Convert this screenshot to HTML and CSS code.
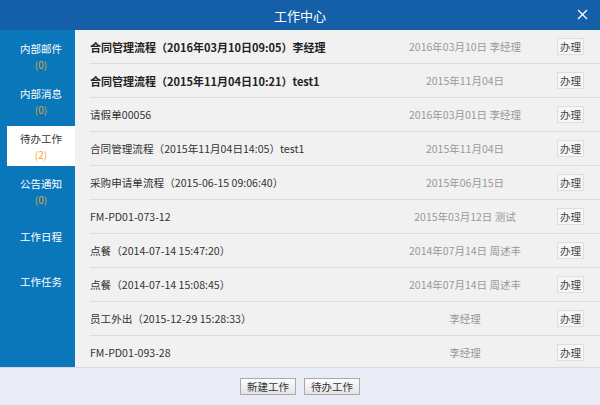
FILE: index.html
```html
<!DOCTYPE html>
<html lang="zh-CN">
  <head>
    <meta charset="UTF-8" />
    <meta name="viewport" content="width=device-width, initial-scale=1.0" />
    <title>工作中心</title>
    <link rel="stylesheet" href="styles.css">
  </head>
  <body>
    <section class="window">
      <header class="titlebar">
        <span class="title">工作中心</span>
        <span class="close">
          <svg width="11" height="11" viewBox="0 0 11 11">
            <path d="M1 1 L10 10 M10 1 L1 10" stroke="#fff" stroke-width="1.3" fill="none" />
          </svg>
        </span>
      </header>

      <div class="content">
        <ul class="side-menu">
          <li class="side-item">
            <span class="side-label">内部邮件</span>
            <span class="side-count">(0)</span>
          </li>
          <li class="side-item">
            <span class="side-label">内部消息</span>
            <span class="side-count">(0)</span>
          </li>
          <li class="side-item side-item-active">
            <span class="side-label">待办工作</span>
            <span class="side-count">(2)</span>
          </li>
          <li class="side-item">
            <span class="side-label">公告通知</span>
            <span class="side-count">(0)</span>
          </li>
          <li class="side-item">
            <span class="side-label">工作日程</span>
          </li>
          <li class="side-item">
            <span class="side-label">工作任务</span>
          </li>
        </ul>

        <ul class="work-list">
          <li class="work-row work-row-new">
            <span class="work-title">合同管理流程（2016年03月10日09:05）李经理</span>
            <span class="work-date">2016年03月10日 李经理</span>
            <span class="work-btn">办理</span>
          </li>
          <li class="work-row work-row-new">
            <span class="work-title">合同管理流程（2015年11月04日10:21）test1</span>
            <span class="work-date">2015年11月04日</span>
            <span class="work-btn">办理</span>
          </li>
          <li class="work-row">
            <span class="work-title">请假单00056</span>
            <span class="work-date">2016年03月01日 李经理</span>
            <span class="work-btn">办理</span>
          </li>
          <li class="work-row">
            <span class="work-title">合同管理流程（2015年11月04日14:05）test1</span>
            <span class="work-date">2015年11月04日</span>
            <span class="work-btn">办理</span>
          </li>
          <li class="work-row">
            <span class="work-title">采购申请单流程（2015-06-15 09:06:40）</span>
            <span class="work-date">2015年06月15日</span>
            <span class="work-btn">办理</span>
          </li>
          <li class="work-row">
            <span class="work-title">FM-PD01-073-12</span>
            <span class="work-date">2015年03月12日 测试</span>
            <span class="work-btn">办理</span>
          </li>
          <li class="work-row">
            <span class="work-title">点餐（2014-07-14 15:47:20）</span>
            <span class="work-date">2014年07月14日 周述丰</span>
            <span class="work-btn">办理</span>
          </li>
          <li class="work-row">
            <span class="work-title">点餐（2014-07-14 15:08:45）</span>
            <span class="work-date">2014年07月14日 周述丰</span>
            <span class="work-btn">办理</span>
          </li>
          <li class="work-row">
            <span class="work-title">员工外出（2015-12-29 15:28:33）</span>
            <span class="work-date">李经理</span>
            <span class="work-btn">办理</span>
          </li>
          <li class="work-row">
            <span class="work-title">FM-PD01-093-28</span>
            <span class="work-date">李经理</span>
            <span class="work-btn">办理</span>
          </li>
        </ul>
      </div>

      <footer class="footer">
        <button class="footer-btn">新建工作</button>
        <button class="footer-btn">待办工作</button>
      </footer>
    </section>
  </body>
</html>
```

FILE: styles.css
```css
html,
body {
  padding: 0;
  margin: 0;
}

body {
  font-family: "Noto Sans CJK SC", "Liberation Sans", sans-serif;
  color: #333;
}

.window {
  width: 600px;
  height: 405px;
  display: flex;
  flex-direction: column;
  overflow: hidden;
}

/*
* Title bar
*/

.titlebar {
  height: 30px;
  flex: none;
  position: relative;
  display: flex;
  align-items: center;
  justify-content: center;
  background-color: #155fa8;
}

.title {
  color: #fff;
  font-size: 13px;
}

.close {
  position: absolute;
  right: 12px;
  top: 9px;
  width: 11px;
  height: 11px;
  display: flex;
  cursor: pointer;
}

/*
* Content
*/

.content {
  height: 337px;
  flex: none;
  display: flex;
}

.side-menu {
  list-style-type: none;
  margin: 0;
  padding: 6px 0 0 7px;
  width: 68px;
  flex: none;
  background-color: #0b77bb;
}

.side-item {
  height: 40px;
  margin-bottom: 5px;
  display: flex;
  flex-direction: column;
  align-items: center;
  justify-content: center;
  gap: 1px;
  cursor: pointer;
}

.side-label {
  color: #fff;
  font-size: 10.5px;
  line-height: 15px;
}

.side-count {
  color: #d9a542;
  font-size: 10px;
  line-height: 15px;
}

.side-item-active {
  background-color: #fff;
}

.side-item-active .side-label {
  color: #333;
}

.side-item-active .side-count {
  color: #f5a22a;
}

.work-list {
  list-style-type: none;
  margin: 0;
  padding: 0 0 0 15px;
  flex: 1;
  background-color: #f1f1f1;
  overflow: hidden;
}

.work-row {
  height: 33px;
  padding-right: 16px;
  border-bottom: 1px solid #dcdde1;
  display: grid;
  grid-template-columns: 1fr 170px 27px;
  column-gap: 7px;
  align-items: center;
}

.work-title {
  font-size: 10.6px;
  white-space: nowrap;
  color: #333;
}

.work-row-new .work-title {
  font-size: 11px;
  font-weight: bold;
  color: #222;
}

.work-date {
  text-align: center;
  font-size: 10.5px;
  color: #999;
  white-space: nowrap;
}

.work-btn {
  height: 15px;
  border: 1px solid #dedede;
  background-color: #f6f6f6;
  font-size: 10.5px;
  line-height: 15px;
  text-align: center;
  color: #444;
  cursor: pointer;
}

/*
* Footer
*/

.footer {
  height: 37px;
  flex: none;
  border-top: 1px solid #d6d9e6;
  background-color: #e9ecf7;
  display: flex;
  align-items: center;
  justify-content: center;
  gap: 8px;
}

.footer-btn {
  width: 56px;
  height: 17px;
  margin: 0;
  padding: 0;
  border: 1px solid #a9a9a9;
  background: linear-gradient(#fdfdfd, #e4e4e4);
  font-family: "Noto Sans CJK SC", sans-serif;
  font-size: 10.5px;
  line-height: 15px;
  color: #333;
  cursor: pointer;
}
```
